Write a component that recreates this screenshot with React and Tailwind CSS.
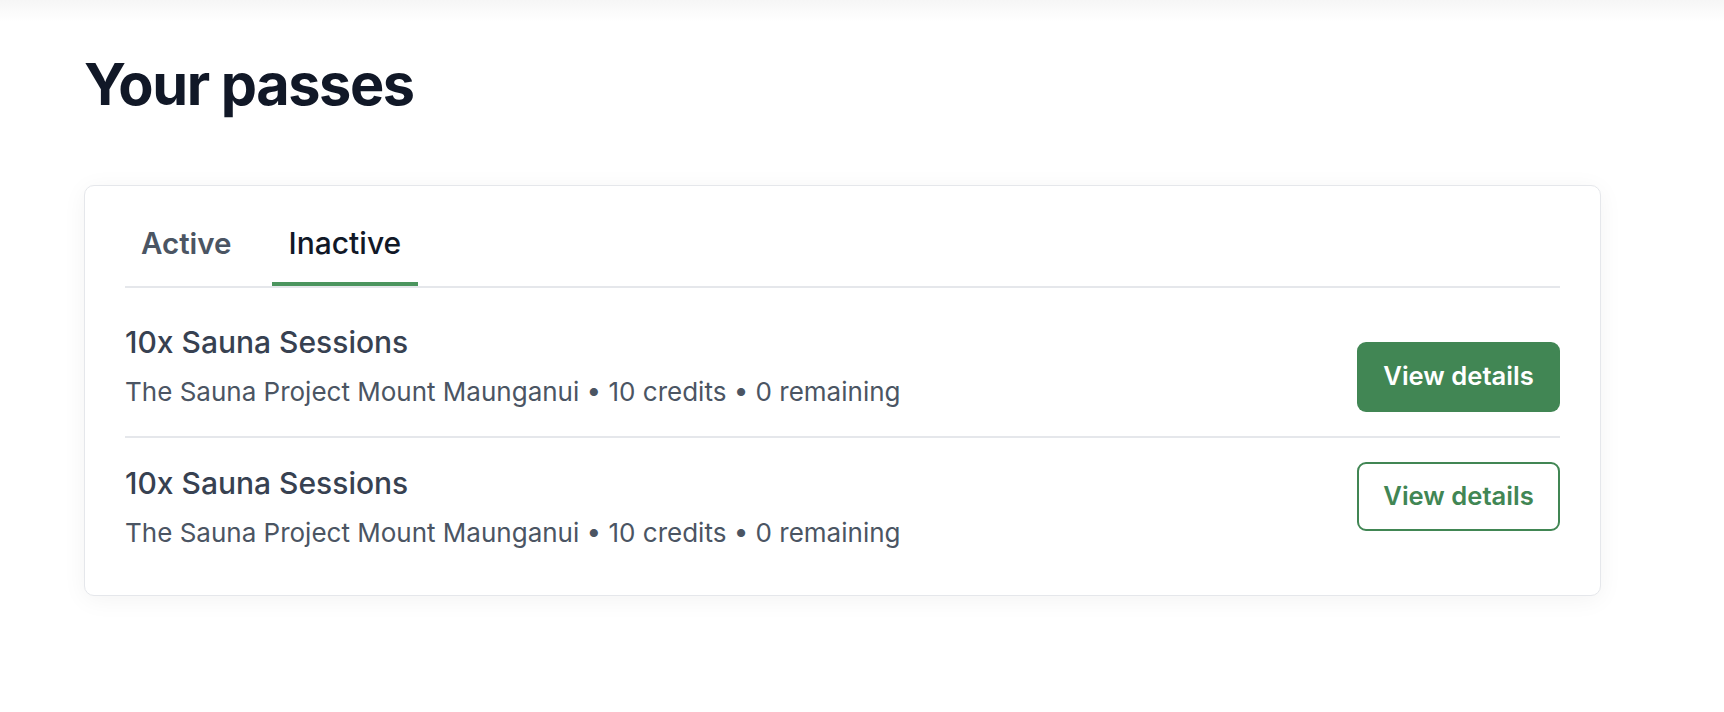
import React from "react";

const rows = [
  { title: "10x Sauna Sessions", sub: "The Sauna Project Mount Maunganui • 10 credits • 0 remaining", filled: true },
  { title: "10x Sauna Sessions", sub: "The Sauna Project Mount Maunganui • 10 credits • 0 remaining", filled: false },
];

export default function App() {
  return (
    <div className="relative min-h-[712px] w-full bg-white font-['Inter',sans-serif]">
      <div className="absolute left-0 right-0 top-0 h-[22px] bg-gradient-to-b from-[#f6f6f6] to-white" />
      <div className="relative ml-[84px] w-[1517px] pt-[49px]">
        <h1 className="text-[57.6px] font-bold leading-[70px] tracking-[-0.025em] text-[#111827]">Your passes</h1>
        <div className="mt-[66px] rounded-[10px] border border-[#e5e7eb] bg-white px-[40px] pt-[33px] pb-[19px] shadow-[0_4px_24px_rgba(0,0,0,0.05)]">
          <div className="mb-[9px] flex gap-[24px] border-b-2 border-[#e5e7eb]">
            <button className="border-b-4 border-transparent px-[16px] pb-[15px] text-[29.5px] font-semibold leading-[48px] text-[#4b5563]">
              Active
            </button>
            <button className="border-b-4 border-[#4b955e] px-[17px] pb-[15px] text-[30px] font-medium leading-[48px] text-[#111827]">
              Inactive
            </button>
          </div>
          {rows.map((r, i) => (
            <div
              key={i}
              className={`flex justify-between py-[24px] ${i === 0 ? "items-end border-b-2 border-[#e5e7eb]" : "items-start"}`}
            >
              <div>
                <div className="text-[30px] font-medium leading-[43.2px] text-[#374151]">{r.title}</div>
                <div className="mt-[9px] text-[26px] leading-[38.4px] text-[#4b5563]">{r.sub}</div>
              </div>
              {r.filled ? (
                <button className="h-[70px] w-[203px] rounded-[9px] bg-[#418654] text-[25.6px] font-semibold leading-[38.4px] text-white">
                  View details
                </button>
              ) : (
                <button className="h-[69px] w-[203px] rounded-[9px] border-2 border-[#418654] bg-white text-[25.6px] font-semibold leading-[38.4px] text-[#418654]">
                  View details
                </button>
              )}
            </div>
          ))}
        </div>
      </div>
    </div>
  );
}
